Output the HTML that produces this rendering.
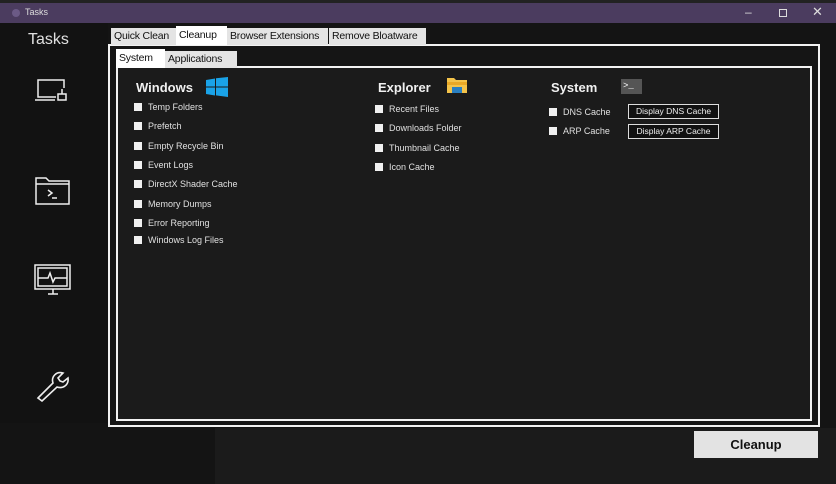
<!DOCTYPE html>
<html><head><style>
*{margin:0;padding:0;box-sizing:border-box}
body{width:836px;height:484px;background:#141414;position:relative;overflow:hidden;font-family:"Liberation Sans",sans-serif;color:#e8e8e8}
.a{position:absolute}
.tb{left:0;top:3px;width:836px;height:20px;background:#4b3c5f}
.tab{position:absolute;height:17px;background:#e4e4e4;color:#111;font-size:10.5px;line-height:17px;padding-left:3px;white-space:nowrap;overflow:hidden;letter-spacing:-0.2px}
.sel{background:#fff}
.h{position:absolute;font-size:13px;font-weight:bold;color:#f0f0f0}
.cb{position:absolute;font-size:9px;color:#e0e0e0;padding-left:14px;line-height:10px;white-space:nowrap}
.cb:before{content:"";position:absolute;left:0;top:1px;width:8px;height:8px;background:#f0f0f0}
.btn{position:absolute;border:1px solid #ddd;background:#111;color:#eee;font-size:8.5px;text-align:center;line-height:13px}
</style></head><body>
<div class="a" style="left:0;top:0;width:836px;height:3px;background:#222"></div>
<div class="a tb"></div>
<div class="a" style="left:12px;top:9px;width:8px;height:8px;border-radius:50%;background:#6b5a86"></div>
<div class="a" style="left:25px;top:7px;font-size:9px;color:#ddd">Tasks</div>
<div class="a" style="left:745px;top:5px;font-size:12px;color:#ddd">&#8211;</div>
<div class="a" style="left:779px;top:9px;width:8px;height:8px;border:1px solid #ddd"></div>
<div class="a" style="left:812px;top:4px;font-size:13px;color:#ddd">&#10005;</div>
<div class="a" style="left:0;top:23px;width:108px;height:400px;background:#121212"></div>
<div class="a" style="left:28px;top:31px;font-size:16px;color:#e0e0e0">Tasks</div>
<svg class="a" style="left:34px;top:78px" width="40" height="28" viewBox="0 0 40 28" fill="none" stroke="#eee" stroke-width="1.5">
<path d="M22 19H4V2h26v8M1 22h20"/><path d="M28 11v5M24 16h8v6h-8z"/></svg>
<svg class="a" style="left:35px;top:176px" width="36" height="30" viewBox="0 0 36 30" fill="none" stroke="#eee" stroke-width="1.5">
<path d="M1 2h10l3 3h20v23H1z M1 8h33"/><path d="M13 14l4 3-4 3M17 22h5"/></svg>
<svg class="a" style="left:34px;top:263px" width="38" height="34" viewBox="0 0 38 34" fill="none" stroke="#eee" stroke-width="1.5">
<rect x="1" y="2" width="35" height="24"/><rect x="4" y="5" width="29" height="18"/><path d="M4 15h10l2-5 3 9 2-4h12M14 31h10M19 26v5"/></svg>
<svg class="a" style="left:35px;top:368px" width="36" height="34" viewBox="0 0 36 34" fill="none" stroke="#eee" stroke-width="1.6">
<path d="M3 30l15-15c-2-6 3-12 10-10l-5 5 2 3 3 1 5-4c1 7-5 11-11 9L7 33z"/></svg>
<div class="a" style="left:215px;top:428px;width:621px;height:56px;background:#1b1b1b"></div>
<div class="a" style="left:108px;top:44px;width:712px;height:383px;border:2px solid #f2f2f2;background:#151515"></div>
<div class="a" style="left:116px;top:66px;width:696px;height:355px;border:2px solid #f2f2f2;background:#1b1b1b"></div>
<div class="tab" style="left:111px;top:28px;width:65px">Quick Clean</div>
<div class="tab sel" style="left:176px;top:26px;width:51px;height:19px;line-height:18px">Cleanup</div>
<div class="tab" style="left:227px;top:28px;width:101px">Browser Extensions</div>
<div class="tab" style="left:329px;top:28px;width:97px">Remove Bloatware</div>
<div class="tab sel" style="left:116px;top:49px;width:49px;height:19px;line-height:18px">System</div>
<div class="tab" style="left:165px;top:51px;width:72px">Applications</div>
<div class="h" style="left:136px;top:80px">Windows</div>
<svg class="a" style="left:206px;top:77px" width="22" height="20"><path fill="#1aa3e8" d="M0 3l9-1.5V9.5H0zM10 1.3L22 0v9.5H10zM0 10.5h9v8L0 17zM10 10.5h12V20l-12-1.6z"/></svg>
<div class="cb" style="left:134px;top:102px">Temp Folders</div>
<div class="cb" style="left:134px;top:121px">Prefetch</div>
<div class="cb" style="left:134px;top:141px">Empty Recycle Bin</div>
<div class="cb" style="left:134px;top:160px">Event Logs</div>
<div class="cb" style="left:134px;top:179px">DirectX Shader Cache</div>
<div class="cb" style="left:134px;top:199px">Memory Dumps</div>
<div class="cb" style="left:134px;top:218px">Error Reporting</div>
<div class="cb" style="left:134px;top:235px">Windows Log Files</div>
<div class="h" style="left:378px;top:80px">Explorer</div>
<svg class="a" style="left:447px;top:78px" width="20" height="15"><path fill="#f3c34a" d="M0 0h7l2 2h11v13H0z"/><rect x="0" y="4" width="20" height="3" fill="#e9a826"/><rect x="5" y="9" width="10" height="6" fill="#2a7fc0"/></svg>
<div class="cb" style="left:375px;top:104px">Recent Files</div>
<div class="cb" style="left:375px;top:123px">Downloads Folder</div>
<div class="cb" style="left:375px;top:143px">Thumbnail Cache</div>
<div class="cb" style="left:375px;top:162px">Icon Cache</div>
<div class="h" style="left:551px;top:80px">System</div>
<div class="a" style="left:621px;top:79px;width:21px;height:15px;background:#555;color:#fff;font-size:9px;line-height:14px;padding-left:2px;font-family:'Liberation Mono',monospace">&gt;_</div>
<div class="cb" style="left:549px;top:107px">DNS Cache</div>
<div class="cb" style="left:549px;top:126px">ARP Cache</div>
<div class="btn" style="left:628px;top:104px;width:91px;height:15px">Display DNS Cache</div>
<div class="btn" style="left:628px;top:124px;width:91px;height:15px">Display ARP Cache</div>
<div class="a" style="left:694px;top:431px;width:124px;height:27px;background:#e3e3e3;color:#111;font-size:13px;font-weight:bold;text-align:center;line-height:27px">Cleanup</div>
</body></html>
